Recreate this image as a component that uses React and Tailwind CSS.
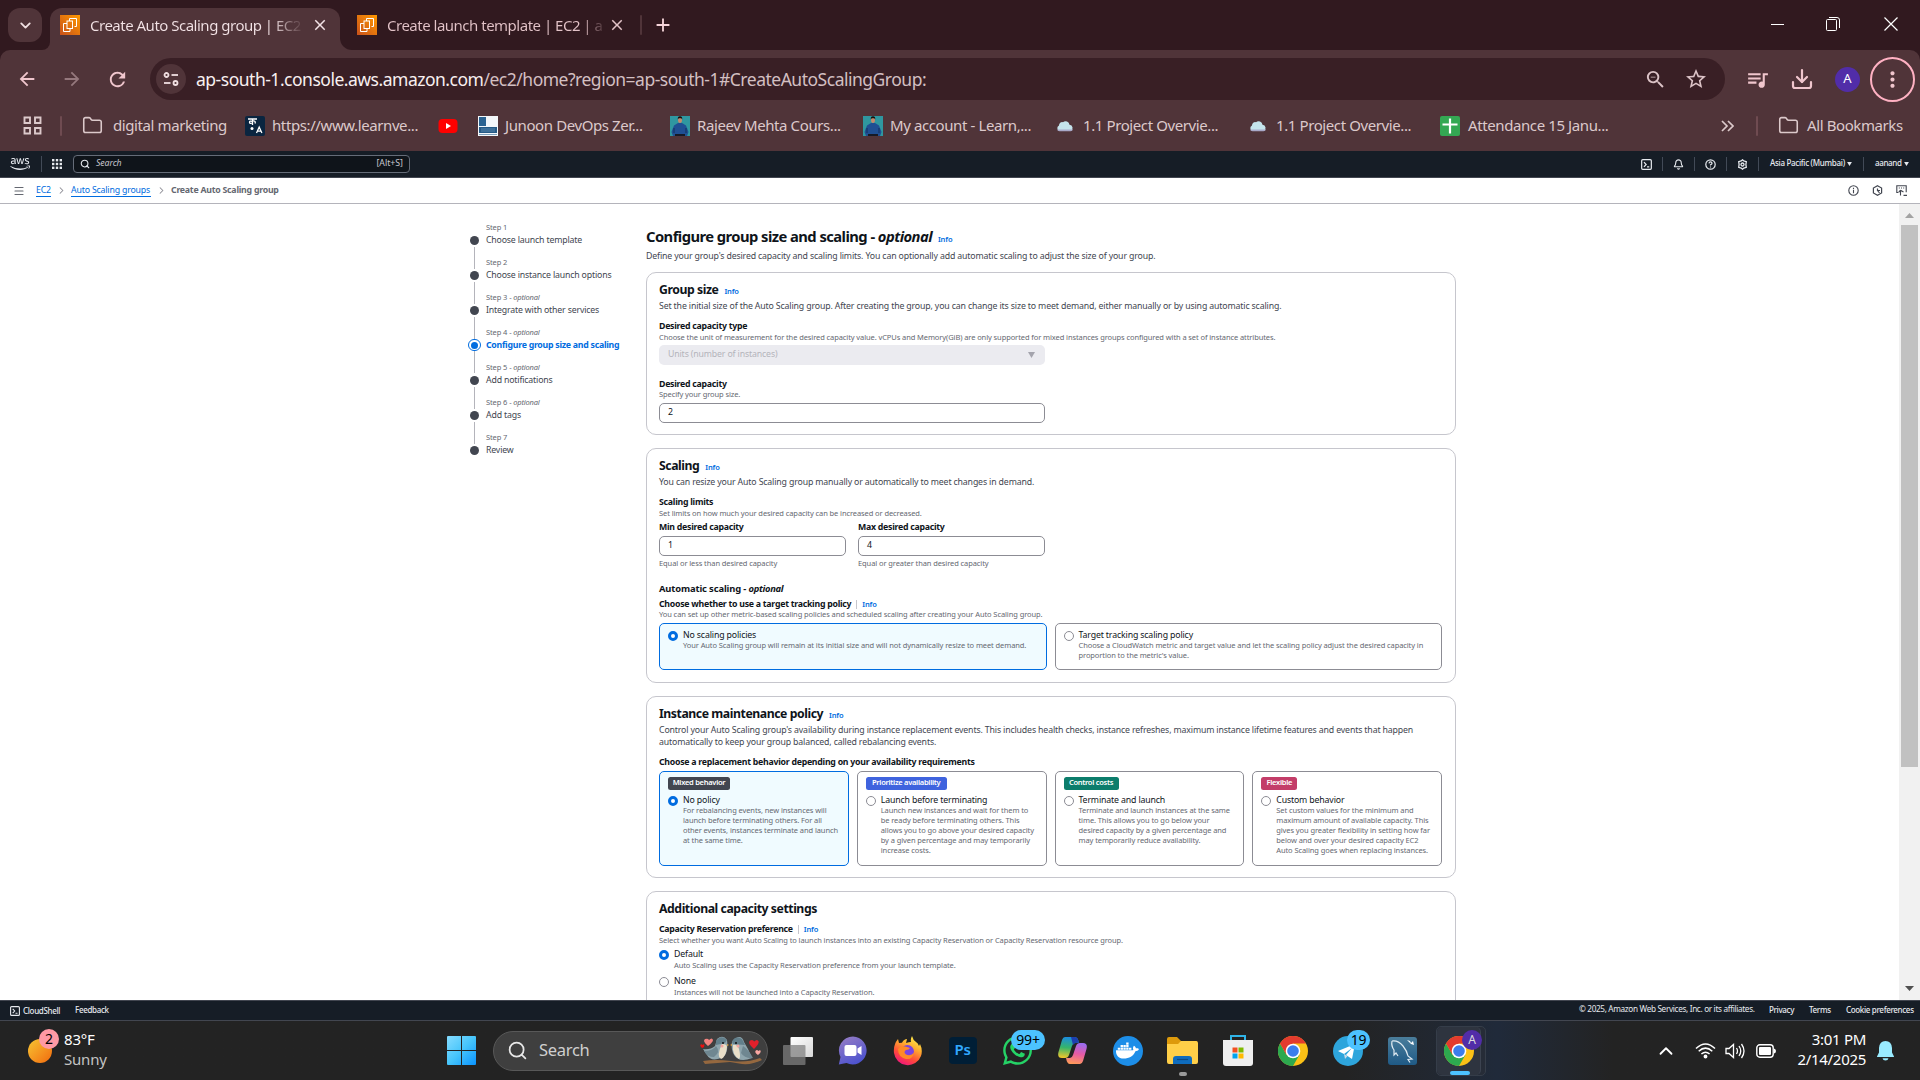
import React from 'react'
import { ChevronDown, ChevronUp, Folder, Download, Search, Bell, Menu, ChevronRight } from 'lucide-react'
import { FaAws, FaWhatsapp, FaDocker } from 'react-icons/fa6'
import { MdArrowBack, MdArrowForward, MdRefresh, MdOutlineZoomOut, MdStarBorder, MdQueueMusic, MdMoreVert, MdAdd, MdClose } from 'react-icons/md'

/* ---------- browser chrome ---------- */

function Ec2Icon() {
  return (
    <svg width="20" height="20" viewBox="0 0 20 20" className="shrink-0">
      <defs>
        <linearGradient id="ec2" x1="0" y1="1" x2="1" y2="0">
          <stop offset="0" stopColor="#c8511b" />
          <stop offset="1" stopColor="#ff9900" />
        </linearGradient>
      </defs>
      <rect width="20" height="20" fill="url(#ec2)" />
      <g fill="none" stroke="#fff" strokeWidth="1">
        <path d="M9.500 6V3.500h7v8h-2" />
        <rect x="7" y="6" width="5.500" height="7.500" />
        <path d="M7 8.500H3.500v8h6.500v-3" />
      </g>
    </svg>
  )
}

function TabStrip() {
  return (
    <div className="flex h-[50px] bg-[#31191f] text-[15px] tracking-[-0.500px]">
      <div className="ml-2 mt-2 flex h-[34px] w-[34px] items-center justify-center rounded-[12px] bg-[#503439] text-[#f0dfe1]">
        <ChevronDown size={17} strokeWidth={2.6} />
      </div>
      <div className="flex w-[8px] items-end bg-[#503439]">
        <div className="h-full w-full rounded-br-[12px] bg-[#31191f]" />
      </div>
      <div className="mt-2 flex h-[42px] w-[290px] items-center rounded-t-[12px] bg-[#503439] pb-2 pl-[10px] text-[#f3e3e6]">
        <Ec2Icon />
        <div className="ml-[10px] w-[221px] whitespace-nowrap bg-linear-to-r from-[#f3e3e6] from-82% to-[#503439] to-97% bg-clip-text text-transparent">
          Create Auto Scaling group | EC2
        </div>
        <MdClose size={18} />
      </div>
      <div className="w-[12px] bg-[#503439]">
        <div className="h-full w-full rounded-bl-[12px] bg-[#31191f]" />
      </div>
      <div className="ml-[5px] mt-2 flex h-[34px] items-center text-[#e3c3c8]">
        <Ec2Icon />
        <div className="ml-[10px] w-[221px] whitespace-nowrap bg-linear-to-r from-[#e3c3c8] from-88% to-[#31191f] bg-clip-text text-transparent">
          Create launch template | EC2 | a
        </div>
        <MdClose size={18} />
        <div className="ml-[14px] h-[20px] w-[2px] rounded bg-[#503439]" />
        <MdAdd size={22} className="ml-[10px] text-[#f6d5da]" />
      </div>
      <div className="ml-auto flex h-[48px] items-center text-white">
        <svg width="13" height="13" viewBox="0 0 13 13" className="mr-[42px]"><path d="M0 6.500h13" stroke="currentColor" /></svg>
        <svg width="14" height="14" viewBox="0 0 14 14" className="mr-[44px]" fill="none" stroke="currentColor">
          <rect x="0.500" y="2.500" width="10" height="11" rx="1" />
          <path d="M3 .5h8q2.500 0 2.500 2.500v8" />
        </svg>
        <svg width="14" height="14" viewBox="0 0 14 14" className="mr-[22px]"><path d="M.5.5l13 13M13.500.5l-13 13" stroke="currentColor" strokeWidth="1.200" /></svg>
      </div>
    </div>
  )
}

function Toolbar() {
  return (
    <div className="flex h-[58px] items-center rounded-t-[10px] bg-[#503439] text-[#f0c6cd]">
      <MdArrowBack size={22} className="ml-[16px]" />
      <MdArrowForward size={22} className="ml-[23px] text-[#95787d]" />
      <MdRefresh size={23} className="ml-[23px]" />
      <div className="ml-[21px] flex h-[42px] w-[1575px] items-center rounded-full bg-[#391f25]">
        <div className="ml-[6px] flex h-[30px] w-[30px] items-center justify-center rounded-full bg-[#503439]">
          <svg width="16" height="16" viewBox="0 0 16 16" fill="none" stroke="#f0dfe1" strokeWidth="1.800">
            <circle cx="3.500" cy="4" r="2" /><path d="M8.500 4H15" />
            <path d="M1 12h6.500" /><circle cx="12.500" cy="12" r="2" />
          </svg>
        </div>
        <div className="ml-[10px] whitespace-nowrap text-[17.500px] tracking-[-0.490px] text-[#d3bfc2]">
          <span className="text-[#f8eff0]">ap-south-1.console.aws.amazon.com</span>/ec2/home?region=ap-south-1#CreateAutoScalingGroup:
        </div>
        <MdOutlineZoomOut size={23} className="ml-auto mr-[17px] text-[#dcc3c7]" />
        <MdStarBorder size={24} className="mr-[17px] text-[#dcc3c7]" />
      </div>
      <MdQueueMusic size={25} className="ml-[20px]" />
      <Download size={24} className="ml-[20px]" strokeWidth={2.200} />
      <div className="ml-[21px] flex h-[25px] w-[25px] items-center justify-center rounded-full bg-[#512da8] text-[13px] text-white">A</div>
      <div className="ml-[10px] flex h-[45px] w-[45px] items-center justify-center rounded-full border-2 border-[#ffb1c3]">
        <MdMoreVert size={25} />
      </div>
    </div>
  )
}

function Instructor() {
  return (
    <svg width="20" height="20" viewBox="0 0 20 20" className="shrink-0">
      <rect width="20" height="20" fill="#2f97a0" />
      <path d="M3 20l-1.500-4L4 9.500 8 7h4l4 2.500 2.500 6.500L17 20z" fill="#1f4f93" />
      <path d="M4 12v5M16 12v5" stroke="#12305f" />
      <path d="M5 18h10v2H5z" fill="#161a26" />
      <ellipse cx="10" cy="4" rx="2" ry="3" fill="#c58a6c" />
      <path d="M7.800 3.500Q7.500.3 10 .3t2.200 3.200l-.9-1.200H8.700z" fill="#15110f" />
    </svg>
  )
}

function Cloud() {
  return (
    <svg width="20" height="20" viewBox="0 0 20 20" className="shrink-0">
      <path d="M4.500 15a3 3 0 0 1-.5-5.600A3.200 3.200 0 0 1 8 6.200a4 4 0 0 1 6.500 2.600A3.200 3.200 0 0 1 15.500 15z" fill="#c5e4ec" />
      <path d="M4.500 15.300q-2-.3-2.500-1.900h16q-.6 1.700-2.500 1.900z" fill="#a9a9c9" />
    </svg>
  )
}

function BookmarksBar() {
  const items = [
    ['w-[163px] gap-[10px]', <Folder size={21} strokeWidth={1.800} className="shrink-0 text-[#dcc9cb]" />, 'digital marketing'],
    ['w-[193px] gap-[7px]', (
      <svg width="20" height="20" viewBox="0 0 20 20" className="shrink-0">
        <rect width="20" height="20" rx="2" fill="#0a2540" />
        <g stroke="#fff" fill="none" strokeWidth="1.300"><path d="M3 3h9M7.500 3v6M7.500 5.500q-3-1-3 .8t3 .7M7.500 5q3.500-.5 2.500 2.500M11.500 17l2.700-6 2.700 6M12.500 15.200h3.500" /></g>
        <circle cx="7" cy="12.500" r="1.500" fill="#fff" />
      </svg>), 'https://www.learnve...'],
    ['w-[40px]', (
      <svg width="20" height="20" viewBox="0 0 20 20"><rect x=".5" y="3" width="19" height="14" rx="4" fill="#f00" /><path d="M8 7l5 3-5 3z" fill="#fff" /></svg>), ''],
    ['w-[192px] gap-[7px]', (
      <svg width="20" height="20" viewBox="0 0 20 20" className="shrink-0">
        <rect width="20" height="20" fill="#f3f7fa" /><path d="M1 1h7v9H1z" fill="#2b6391" /><path d="M1 11h18v6H1z" fill="#255a86" /><path d="M1 18h18v1H1z" fill="#7da0bd" /><path d="M3 13h14M3 15h14" stroke="#6b98bb" strokeWidth=".7" />
      </svg>), 'Junoon DevOps Zer...'],
    ['w-[193px] gap-[7px]', <Instructor />, 'Rajeev Mehta Cours...'],
    ['w-[192px] gap-[7px]', <Instructor />, 'My account - Learn,...'],
    ['w-[193px] gap-[8px]', <Cloud />, '1.1 Project Overvie...'],
    ['w-[192px] gap-[8px]', <Cloud />, '1.1 Project Overvie...'],
    ['w-[272px] gap-[8px]', (
      <svg width="20" height="20" viewBox="0 0 20 20" className="shrink-0"><rect width="20" height="20" rx="2" fill="#34a853" /><path d="M10 2.500v15M2.500 8.500h15" stroke="#fff" strokeWidth="2.200" /></svg>), 'Attendance 15 Janu...'],
  ]
  return (
    <div className="flex h-[43px] items-center bg-[#503439] pb-[8px] pl-[23px] text-[15px] tracking-[-0.400px] text-[#dcc9cb]">
      <svg width="19" height="19" viewBox="0 0 19 19" fill="none" stroke="currentColor" strokeWidth="1.900">
        <path d="M1.500 1.500h5.500v5.500H1.500zM12 1.500h5.500v5.500H12zM1.500 12h5.500v5.500H1.500zM12 12h5.500v5.500H12z" />
      </svg>
      <div className="ml-[18px] mr-[20px] h-[20px] w-[2px] rounded bg-[#6f4b51]" />
      {items.map(([cls, icon, label], i) => (
        <div key={i} className={'flex shrink-0 items-center whitespace-nowrap ' + cls}>{icon}<span>{label}</span></div>
      ))}
      <svg width="13" height="12" viewBox="0 0 13 12" className="ml-[9px]" fill="none" stroke="currentColor" strokeWidth="1.700"><path d="M1 1l5 5-5 5M7 1l5 5-5 5" /></svg>
      <div className="ml-[22px] mr-[20px] h-[20px] w-[2px] rounded bg-[#6f4b51]" />
      <Folder size={21} strokeWidth={1.800} />
      <span className="ml-[8px] whitespace-nowrap">All Bookmarks</span>
    </div>
  )
}

/* ---------- AWS console ---------- */

function ShellIcon({ size = 10 }) {
  return (
    <svg width={size} height={size} viewBox="0 0 10 10" fill="none" stroke="currentColor" strokeWidth="1.100">
      <rect x=".6" y=".6" width="8.800" height="8.800" rx="1" /><path d="M2.700 2.800L4.700 5 2.700 7.200M5.500 7.200h2" />
    </svg>
  )
}

function NavSep() {
  return <div className="h-[14px] w-px bg-[#424a57]" />
}

function AwsNav() {
  return (
    <div className="flex h-[27px] items-center border-b border-[#424650] bg-[#161d26] text-[8px] font-medium tracking-[-0.250px] text-[#e6e9ee]">
      <FaAws size={20} className="ml-[10px]" />
      <div className="ml-[11px] h-[16px] w-px bg-[#424a57]" />
      <svg width="10" height="10" viewBox="0 0 10 10" className="ml-[10px]" fill="currentColor">
        {[0, 3.800, 7.600].map((y) => [0, 3.800, 7.600].map((x) => <rect key={x + '-' + y} x={x} y={y} width="2.400" height="2.400" />))}
      </svg>
      <div className="ml-[11px] flex h-[18px] w-[337px] items-center rounded-[4px] border border-[#656c78] bg-[#0f141a] px-[6px]">
        <Search size={10} strokeWidth={2.600} />
        <span className="ml-[6px] text-[8.750px] font-normal italic tracking-[-0.100px] text-[#c6c6cd]">Search</span>
        <span className="ml-auto text-[8.750px] font-normal tracking-[0] text-[#c6c6cd]">[Alt+S]</span>
      </div>
      <div className="ml-auto flex items-center">
        <ShellIcon size={11} />
        <div className="ml-[10px]"><NavSep /></div>
        <Bell size={11} strokeWidth={2.400} className="ml-[10px]" />
        <div className="ml-[10px]"><NavSep /></div>
        <svg width="11" height="11" viewBox="0 0 11 11" className="ml-[10px]" fill="none" stroke="currentColor" strokeWidth="1.200"><circle cx="5.500" cy="5.500" r="4.700" /><path d="M4 4.300q.2-1.500 1.500-1.500T7 4.200q0 .9-1.500 1.600v.7M5.500 7.500v1" /></svg>
        <div className="ml-[10px]"><NavSep /></div>
        <svg width="11" height="11" viewBox="0 0 11 11" className="ml-[10px]" fill="none" stroke="currentColor" strokeWidth="1.300"><path d="M5.500.8l1.300 1.200 2.500.7-.4 2.800.4 2.800-2.500.7-1.300 1.200L4.200 9l-2.500-.7.4-2.800-.4-2.800L4.200 2z" /><circle cx="5.500" cy="5.500" r="1.500" /></svg>
        <div className="ml-[10px]"><NavSep /></div>
        <span className="ml-[11px] w-[74px] whitespace-nowrap pb-[2px] tracking-[-0.300px]">Asia Pacific (Mumbai)</span>
        <svg width="5" height="4" viewBox="0 0 6 5" className="ml-[3px]" fill="currentColor"><path d="M0 0h6L3 5z" /></svg>
        <div className="ml-[11px]"><NavSep /></div>
        <span className="ml-[11px] w-[26px] whitespace-nowrap pb-[2px] tracking-[-0.350px]">aanand</span>
        <svg width="5" height="4" viewBox="0 0 6 5" className="ml-[3px] mr-[11px]" fill="currentColor"><path d="M0 0h6L3 5z" /></svg>
      </div>
    </div>
  )
}

function Breadcrumbs() {
  return (
    <div className="flex h-[26px] items-center border-b border-[#b4b4bb] bg-white text-[8.750px] leading-[11px] tracking-[-0.170px]">
      <Menu size={12} strokeWidth={2.200} className="ml-[13px] text-[#656871]" />
      <span className="ml-[11px] w-[15px] whitespace-nowrap border-b border-[#006ce0] text-[#006ce0]">EC2</span>
      <ChevronRight size={11} strokeWidth={2.200} className="ml-[5px] text-[#8c8c94]" />
      <span className="ml-[4px] w-[80px] whitespace-nowrap border-b border-[#006ce0] text-[#006ce0]">Auto Scaling groups</span>
      <ChevronRight size={11} strokeWidth={2.200} className="ml-[5px] text-[#8c8c94]" />
      <span className="ml-[4px] whitespace-nowrap font-bold tracking-[-0.240px] text-[#656871]">Create Auto Scaling group</span>
      <div className="ml-auto mr-[13px] flex items-center gap-[13px] text-[#424650]">
        <svg width="11" height="11" viewBox="0 0 11 11" fill="none" stroke="currentColor" strokeWidth="1.100"><circle cx="5.500" cy="5.500" r="4.700" /><path d="M5.500 2.700v1.200M5.500 4.800v3.500" /></svg>
        <svg width="11" height="11" viewBox="0 0 11 11" fill="none" stroke="currentColor" strokeWidth="1.200"><path d="M5.500.7L9.600 3v5L5.500 10.300 1.400 8V3z" /><path d="M5.500 3.500v2h2.500M5.500 5.500L7.500 8" /></svg>
        <svg width="11" height="11" viewBox="0 0 11 11" fill="none" stroke="currentColor" strokeWidth="1.100"><path d="M2.500 7.500H.8V.8h9.400v6.400M2.800 3h1M5 3h1M7.200 3h1" /><path d="M4.500 10.500V5.200M4.500 5.200l-1.700 2M4.500 5.200l3 1.800M7.500 10.400h3.500" /></svg>
      </div>
    </div>
  )
}

const steps = [
  ['Step 1', false, 'Choose launch template'],
  ['Step 2', false, 'Choose instance launch options'],
  ['Step 3', true, 'Integrate with other services'],
  ['Step 4', true, 'Configure group size and scaling'],
  ['Step 5', true, 'Add notifications'],
  ['Step 6', true, 'Add tags'],
  ['Step 7', false, 'Review'],
]

function Steps() {
  return (
    <div className="ml-[468px] w-[178px] shrink-0 pt-[17px]">
      {steps.map(([step, optional, label], i) => (
        <div key={i} className="flex h-[35px]">
          <div className="flex w-[13px] flex-col items-center pt-[13px]">
            {i === 3 ? (
              <div className="flex h-[13px] w-[13px] items-center justify-center rounded-full border-[1.500px] border-[#006ce0]">
                <div className="h-[7px] w-[7px] rounded-full bg-[#006ce0]" />
              </div>
            ) : (
              <div className="my-[2px] h-[9px] w-[9px] shrink-0 rounded-full bg-[#424650]" />
            )}
            {i < 6 && <div className="-mb-[12px] h-[22px] w-px shrink-0 bg-[#b4b4bb]" />}
          </div>
          <div className="ml-[5px] whitespace-nowrap">
            <div className="text-[7.500px] leading-[12px] tracking-[-0.100px] text-[#656871]">
              {step}{optional && <> - <i className="tracking-[-0.200px]">optional</i></>}
            </div>
            <div className={i === 3 ? 'mt-px text-[8.750px] font-bold leading-[13px] tracking-[-0.260px] text-[#006ce0]' : 'mt-px text-[8.750px] leading-[13px] tracking-[-0.170px] text-[#424650]'}>{label}</div>
          </div>
        </div>
      ))}
    </div>
  )
}

function Card({ className = '', children }) {
  return <section className={'rounded-[10px] border border-[#c6c6cd] bg-white pl-[12px] pr-[13px] pt-[9px] ' + className}>{children}</section>
}
function Info({ className = '' }) {
  return <span className={'text-[7.500px] font-semibold not-italic tracking-[-0.150px] text-[#006ce0] ' + className}>Info</span>
}
function Heading({ info, children }) {
  return (
    <h2 className="mb-px whitespace-nowrap text-[12.250px] font-bold leading-[15px] tracking-[-0.440px] text-[#0f141a]">
      {children}{info && <Info className="ml-[6px]" />}
    </h2>
  )
}
function Desc({ children }) {
  return <p className="whitespace-nowrap text-[8.750px] leading-[12px] tracking-[-0.143px] text-[#424650]">{children}</p>
}
function Label({ className = '', children }) {
  return <div className={'whitespace-nowrap text-[8.750px] font-bold leading-[12px] tracking-[-0.260px] text-[#0f141a] ' + className}>{children}</div>
}
function Small({ className = '', children }) {
  return <p className={'whitespace-nowrap text-[7.500px] leading-[10px] tracking-[-0.092px] text-[#656871] ' + className}>{children}</p>
}
function Field({ className = '', children }) {
  return <div className={'flex h-[20px] items-center rounded-[5px] border border-[#8c8c94] px-[8px] text-[8.750px] text-[#0f141a] ' + className}>{children}</div>
}
function Radio({ on }) {
  return on
    ? <div className="h-[10px] w-[10px] shrink-0 rounded-full border-[3px] border-[#006ce0] bg-white" />
    : <div className="h-[10px] w-[10px] shrink-0 rounded-full border border-[#8c8c94] bg-white" />
}
function Tile({ on, badge, badgeClass, title, lines, className = '' }) {
  return (
    <div className={'flex-1 rounded-[5px] border pl-[8px] pt-[5px] ' + (on ? 'border-[#006ce0] bg-[#f0fbff] ' : 'border-[#8c8c94] bg-white ') + className}>
      {badge && <div className={'mb-[4px] flex h-[13px] items-center justify-center whitespace-nowrap rounded-[2.500px] pb-px text-[7.500px] font-semibold tracking-[-0.280px] text-white ' + badgeClass}>{badge}</div>}
      <div className="flex">
        <div className="pt-[2px]"><Radio on={on} /></div>
        <div className="ml-[5px]">
          <div className="whitespace-nowrap text-[8.750px] leading-[12px] tracking-[-0.143px] text-[#0f141a]">{title}</div>
          <div className="-mt-px">{lines.map((l) => <Small key={l}>{l}</Small>)}</div>
        </div>
      </div>
    </div>
  )
}
function LabelSep() {
  return <span className="ml-[5px] mr-[5px] inline-block h-[9px] w-px bg-[#c6c6cd] align-middle" />
}

function Main() {
  return (
    <div className="w-[810px] shrink-0">
      <h1 className="mt-[22px] whitespace-nowrap text-[14.750px] font-bold leading-[20px] tracking-[-0.550px] text-[#0f141a]">
        Configure group size and scaling - <i>optional</i><Info className="ml-[6px]" />
      </h1>
      <div className="mt-px"><Desc>Define your group's desired capacity and scaling limits. You can optionally add automatic scaling to adjust the size of your group.</Desc></div>

      <Card className="mt-[10px] h-[163px]">
        <Heading info>Group size</Heading>
        <Desc>Set the initial size of the Auto Scaling group. After creating the group, you can change its size to meet demand, either manually or by using automatic scaling.</Desc>
        <Label className="mt-[8px]">Desired capacity type</Label>
        <Small>Choose the unit of measurement for the desired capacity value. vCPUs and Memory(GiB) are only supported for mixed instances groups configured with a set of instance attributes.</Small>
        <div className="mt-[3px] flex h-[20px] w-[386px] items-center justify-between rounded-[5px] bg-[#ebebf0] pl-[9px] pr-[10px] text-[8.750px] tracking-[-0.147px] text-[#b4b4bb]">
          Units (number of instances)
          <svg width="7" height="6" viewBox="0 0 7 6" fill="#a4a4ad"><path d="M0 0h7L3.500 6z" /></svg>
        </div>
        <Label className="mt-[13px]">Desired capacity</Label>
        <Small className="-mt-px">Specify your group size.</Small>
        <Field className="mt-[4px] w-[386px]">2</Field>
      </Card>

      <Card className="mt-[13px] h-[235px]">
        <Heading info>Scaling</Heading>
        <Desc>You can resize your Auto Scaling group manually or automatically to meet changes in demand.</Desc>
        <Label className="mt-[8px]">Scaling limits</Label>
        <Small>Set limits on how much your desired capacity can be increased or decreased.</Small>
        <div className="mt-[3px] flex w-[386px] gap-[12px]">
          <div className="w-[187px]">
            <Label>Min desired capacity</Label>
            <Field className="mt-[3px]">1</Field>
            <Small className="mt-[2px]">Equal or less than desired capacity</Small>
          </div>
          <div className="w-[187px]">
            <Label>Max desired capacity</Label>
            <Field className="mt-[3px]">4</Field>
            <Small className="mt-[2px]">Equal or greater than desired capacity</Small>
          </div>
        </div>
        <div className="mt-[14px] whitespace-nowrap text-[9.400px] font-bold leading-[13px] tracking-[-0.130px] text-[#0f141a]">Automatic scaling - <i className="tracking-[-0.300px]">optional</i></div>
        <Label className="mt-[3px]">Choose whether to use a target tracking policy<LabelSep /><Info /></Label>
        <Small className="-mt-px">You can set up other metric-based scaling policies and scheduled scaling after creating your Auto Scaling group.</Small>
        <div className="mt-[4px] flex gap-[8px]">
          <Tile on className="h-[47px]" title="No scaling policies" lines={['Your Auto Scaling group will remain at its initial size and will not dynamically resize to meet demand.']} />
          <Tile className="h-[47px]" title="Target tracking scaling policy" lines={['Choose a CloudWatch metric and target value and let the scaling policy adjust the desired capacity in', "proportion to the metric's value."]} />
        </div>
      </Card>

      <Card className="mt-[13px] h-[182px]">
        <Heading info>Instance maintenance policy</Heading>
        <Desc>Control your Auto Scaling group's availability during instance replacement events. This includes health checks, instance refreshes, maximum instance lifetime features and events that happen<br />automatically to keep your group balanced, called rebalancing events.</Desc>
        <Label className="mt-[8px]">Choose a replacement behavior depending on your availability requirements</Label>
        <div className="mt-[3px] flex gap-[8px]">
          <Tile on className="h-[95px] w-0" badge="Mixed behavior" badgeClass="w-[62px] bg-[#424650]" title="No policy" lines={['For rebalancing events, new instances will', 'launch before terminating others. For all', 'other events, instances terminate and launch', 'at the same time.']} />
          <Tile className="h-[95px] w-0" badge="Prioritize availability" badgeClass="w-[81px] bg-[#3f63de]" title="Launch before terminating" lines={['Launch new instances and wait for them to', 'be ready before terminating others. This', 'allows you to go above your desired capacity', 'by a given percentage and may temporarily', 'increase costs.']} />
          <Tile className="h-[95px] w-0" badge="Control costs" badgeClass="w-[55px] bg-[#0c7d6c]" title="Terminate and launch" lines={['Terminate and launch instances at the same', 'time. This allows you to go below your', 'desired capacity by a given percentage and', 'may temporarily reduce availability.']} />
          <Tile className="h-[95px] w-0" badge="Flexible" badgeClass="w-[36px] bg-[#c33d69]" title="Custom behavior" lines={['Set custom values for the minimum and', 'maximum amount of available capacity. This', 'gives you greater flexibility in setting how far', 'below and over your desired capacity EC2', 'Auto Scaling goes when replacing instances.']} />
        </div>
      </Card>

      <Card className="mt-[13px] h-[160px]">
        <Heading>Additional capacity settings</Heading>
        <Label className="mt-[7px]">Capacity Reservation preference<LabelSep /><Info /></Label>
        <Small>Select whether you want Auto Scaling to launch instances into an existing Capacity Reservation or Capacity Reservation resource group.</Small>
        {[['Default', 'Auto Scaling uses the Capacity Reservation preference from your launch template.', true], ['None', 'Instances will not be launched into a Capacity Reservation.', false]].map(([t, d, on]) => (
          <div key={t} className="mb-[5px] mt-[3px] flex">
            <div className="pt-[2px]"><Radio on={on} /></div>
            <div className="ml-[5px]">
              <div className="text-[8.750px] leading-[12px] tracking-[-0.147px] text-[#0f141a]">{t}</div>
              <Small>{d}</Small>
            </div>
          </div>
        ))}
      </Card>
    </div>
  )
}

function Scrollbar() {
  return (
    <div className="ml-auto flex h-full w-[21px] flex-col items-center bg-[#f1f1f1]">
      <svg width="9" height="5" viewBox="0 0 9 5" className="mt-[9px]" fill="#a3a3a3"><path d="M4.500 0L9 5H0z" /></svg>
      <div className="mt-[7px] h-[542px] w-[17px] bg-[#c1c1c1]" />
      <svg width="9" height="5" viewBox="0 0 9 5" className="mb-[9px] mt-auto" fill="#505050"><path d="M0 0h9L4.500 5z" /></svg>
    </div>
  )
}

function Footer() {
  return (
    <div className="flex h-[21px] items-center whitespace-nowrap border-y border-[#424650] bg-[#161d26] text-[8px] font-medium tracking-[-0.330px] text-[#e6e9ee]">
      <span className="ml-[10px]"><ShellIcon size={10} /></span>
      <span className="ml-[3px] w-[52px]">CloudShell</span>
      <span className="pb-[2px]">Feedback</span>
      <span className="ml-auto w-[190px] pb-[2px] font-normal tracking-[-0.330px] text-[8.200px]">© 2025, Amazon Web Services, Inc. or its affiliates.</span>
      <span className="w-[40px] pb-[2px]">Privacy</span>
      <span className="w-[37px] pb-[2px]">Terms</span>
      <span className="w-[74px] pb-[2px]">Cookie preferences</span>
    </div>
  )
}

/* ---------- taskbar ---------- */

function Chrome() {
  return (
    <svg width="30" height="30" viewBox="0 0 30 30">
      <circle cx="15" cy="15" r="15" fill="#fbc116" />
      <path d="M2 7.500A15 15 0 0 0 15 30l6.500-11.300L15 15 8.500 18.700z" fill="#2da94f" />
      <path d="M2 7.500A15 15 0 0 1 28 7.500H15L8.500 18.700z" fill="#e33b2e" />
      <circle cx="15" cy="15" r="7.300" fill="#fff" />
      <circle cx="15" cy="15" r="5.800" fill="#3b7ded" />
    </svg>
  )
}

function Birds() {
  return (
    <svg width="62" height="30" viewBox="0 0 62 30">
      <path d="M3 25q12-2 28 0t29-3l2 2q-10 5-20 4L30 26 5 28z" fill="#95683f" />
      <path d="M3 13q7 1 12-3l2-7q6-5 10 1 2 15-6 18-10 4-14-3z" fill="#8fa6ae" />
      <path d="M22 8q5 0 5 3-1 10-6 12-5-3 1-15z" fill="#eadfc8" />
      <path d="M16 5q5-7 11-1l-2 3-9 2z" fill="#627f8b" />
      <path d="M4 15q9 0 12-5 5 6-2 11-7 0-10-6z" fill="#6f8791" />
      <path d="M52 22q-14 6-19-5-4-12 3-15 6-3 8 4l4 7z" fill="#8fa6ae" />
      <path d="M33 9q4-1 6 4 2 8 0 10-7-4-6-14z" fill="#eadfc8" />
      <path d="M32 6q3-7 10-3l3 6-12-1z" fill="#627f8b" />
      <path d="M43 10q6 4 10 12-8 1-12-5z" fill="#6f8791" />
      <circle cx="23" cy="7" r="1" fill="#111" /><circle cx="36" cy="7" r="1" fill="#111" />
      <circle cx="22" cy="10" r="1.500" fill="#f2a5a0" /><circle cx="38" cy="10" r="1.500" fill="#f2a5a0" />
      <path d="M27 8l2 1-2 1zM32 8l-2 1 2 1z" fill="#e0a23c" />
      <path d="M8 10Q2 5 5 3q3-1 4 1 3-3 4 0 0 2-5 6z" fill="#f3837f" />
      <path d="M2 12q-3-3-1-3.600Q2 8 2.400 9q2-1.500 2 .5T2 12z" fill="#e11" />
      <path d="M54 13q-7-6-4-8.500 3-1.500 4.200 1 3-3 4.500 0Q59 8 54 13z" fill="#e3202b" />
      <path d="M58 19q-4-3-2.200-4.600 1.700-.8 2.400.6 2-1.600 2.600 0Q61 17 58 19z" fill="#f9a7a2" />
    </svg>
  )
}

function AppIcon({ children, className = '' }) {
  return <div className={'relative flex h-[50px] w-[55px] shrink-0 items-center justify-center ' + className}>{children}</div>
}

function Taskbar() {
  return (
    <div className="flex h-[59px] items-center bg-linear-to-r from-[#232323] from-70% via-[#202a3a] via-78% to-[#232323] to-84% text-[15px] tracking-[-0.200px] text-white">
      <div className="relative ml-[28px] h-[24px] w-[24px] rounded-full bg-linear-to-br from-[#f5c432] to-[#f0680c]">
        <div className="absolute -top-[10px] left-[11px] flex h-[20px] w-[20px] items-center justify-center rounded-full bg-[#ff99a4] text-[14px] text-black">2</div>
      </div>
      <div className="ml-[12px] w-[383px] pb-[4px] leading-[20px]">
        <div>83°F</div>
        <div className="text-[#c4c4c4]">Sunny</div>
      </div>
      <svg width="29" height="29" viewBox="0 0 29 29">
        <defs><linearGradient id="win" x1="0" y1="0" x2="1" y2="1"><stop offset="0" stopColor="#86dcff" /><stop offset=".5" stopColor="#46c5fb" /><stop offset="1" stopColor="#0a93ff" /></linearGradient></defs>
        <path d="M0 1q0-1 1-1h13v14H0zM15 0h13q1 0 1 1v13H15zM0 15h14v14H1q-1 0-1-1zM15 15h14v13q0 1-1 1H15z" fill="url(#win)" />
      </svg>
      <div className="ml-[17px] flex h-[40px] w-[275px] shrink-0 items-center rounded-full border border-[#585858] bg-[#3f3f3f] pl-[13px] text-[16.500px] tracking-[-0.300px] text-[#cfcfcf]">
        <Search size={21} strokeWidth={2} className="text-[#e8e8e8]" />
        <span className="ml-[11px] w-[161px]">Search</span>
        <Birds />
      </div>

      <div className="ml-[2px] flex">
        <AppIcon>
          <svg width="30" height="28" viewBox="0 0 30 28">
            <defs><linearGradient id="tv" x1="0" y1="0" x2="1" y2="1"><stop stopColor="#fff" /><stop offset="1" stopColor="#d8d8d8" /></linearGradient></defs>
            <rect x="7.500" width="22.500" height="20" rx="1" fill="url(#tv)" /><rect y="8" width="22.500" height="20" rx="1" fill="#808080" opacity=".75" />
          </svg>
        </AppIcon>
        <AppIcon>
          <svg width="29" height="29" viewBox="0 0 29 29">
            <defs><linearGradient id="tm" x1="0" y1="0" x2=".5" y2="1"><stop stopColor="#9a7fc4" /><stop offset="1" stopColor="#4f54cf" /></linearGradient></defs>
            <path d="M15 .5a14 14 0 1 1-6.500 26.600L.8 28.500 2.500 21A14 14 0 0 1 15 .5z" fill="url(#tm)" />
            <rect x="6.500" y="9" width="12" height="11" rx="2" fill="#fff" /><path d="M19.500 12.500l4-2.500v9l-4-2.500z" fill="#fff" />
          </svg>
        </AppIcon>
        <AppIcon>
          <svg width="30" height="30" viewBox="0 0 30 30">
            <defs><linearGradient id="ff" x1=".8" y1="0" x2=".3" y2="1"><stop stopColor="#fff44f" /><stop offset=".35" stopColor="#ffb02e" /><stop offset=".7" stopColor="#ff4a3a" /><stop offset="1" stopColor="#f0157f" /></linearGradient></defs>
            <path d="M19 0q1 4 4 6 2 1 3 4l1-2q3 6 1 12A14 14 0 0 1 1 17Q0 9 5 3l1 4 3-.3Q11 3 14 3l-1 4q3-1 5-1-.7-3 1-6z" fill="url(#ff)" />
            <circle cx="14.500" cy="15.500" r="6.500" fill="#7a45e0" /><path d="M5 13q3-4 9-2l3 1q-1 2-4 2-3 2 0 4.500 5 2 8-2Q20 24 13 23q-8-2-8-10z" fill="#ff8a26" />
          </svg>
        </AppIcon>
        <AppIcon>
          <div className="flex h-[27px] w-[28px] items-center justify-center rounded-[4px] bg-[#001e36] pb-[3px] text-[15px] font-semibold text-[#31a8ff]">Ps</div>
        </AppIcon>
        <AppIcon>
          <FaWhatsapp size={33} color="#25d366" />
          <div className="absolute left-[21px] top-[4px] flex h-[20px] w-[34px] items-center justify-center rounded-full bg-[#4cc2ff] text-[14px] text-black">99+</div>
        </AppIcon>
        <AppIcon>
          <svg width="29" height="27" viewBox="0 0 29 27">
            <defs>
              <linearGradient id="c1" x1=".4" y1="0" x2=".3" y2="1"><stop stopColor="#1b8ce0" /><stop offset=".5" stopColor="#35b56a" /><stop offset="1" stopColor="#f3c62a" /></linearGradient>
              <linearGradient id="c2" x1=".6" y1="0" x2=".4" y2="1"><stop stopColor="#9b6cf0" /><stop offset=".5" stopColor="#e65aa5" /><stop offset="1" stopColor="#ff9a5a" /></linearGradient>
            </defs>
            <path d="M7 0h10q3 0 4 6h-4q-2 0-3 3l-3 9q-1 3-4 3H4q-5 0-3.500-6L4 3q1-3 3-3z" fill="url(#c1)" />
            <path d="M22 27H12q-3 0-4-6h4q2 0 3-3l3-9q1-3 4-3h3q5 0 3.500 6L25 24q-1 3-3 3z" fill="url(#c2)" />
            <path d="M13 0h4q3 0 4 6-4-1-6 2z" fill="#1d3fae" />
          </svg>
        </AppIcon>
        <AppIcon>
          <div className="flex h-[30px] w-[30px] items-center justify-center rounded-full bg-[#1d8ee8] text-white"><FaDocker size={23} /></div>
        </AppIcon>
        <AppIcon>
          <svg width="31" height="27" viewBox="0 0 31 27">
            <path d="M0 2q0-2 2-2h8l4 4h15q1 0 1 1v8H0z" fill="#dd9a0c" />
            <path d="M0 7h11l3-3h15q2 0 2 2v19q0 2-2 2H2q-2 0-2-2z" fill="#ffcf48" />
            <path d="M6 27v-5q0-3 3-3h13q3 0 3 3v5z" fill="#0f6cbd" /><path d="M10 22.500h11" stroke="#0a4a86" strokeWidth="1.200" />
          </svg>
          <div className="absolute bottom-0 h-[4px] w-[8px] rounded-full bg-[#9a9a9a]" />
        </AppIcon>
        <AppIcon>
          <svg width="30" height="32" viewBox="0 0 30 32">
            <path d="M8 6V1h14v5" fill="none" stroke="#2fb4e8" strokeWidth="2" />
            <path d="M0 5h30v23q0 3-3 3H3q-3 0-3-3z" fill="#efefef" />
            <path d="M9.500 12.500h5v5h-5z" fill="#f25022" /><path d="M15.500 12.500h5v5h-5z" fill="#7fba00" /><path d="M9.500 18.500h5v5h-5z" fill="#00a4ef" /><path d="M15.500 18.500h5v5h-5z" fill="#ffb900" />
          </svg>
        </AppIcon>
        <AppIcon><Chrome /></AppIcon>
        <AppIcon>
          <svg width="30" height="30" viewBox="0 0 30 30"><circle cx="15" cy="15" r="15" fill="#2ea5dc" /><path d="M5 15l17-7-3 15-6-4 6-7-8 6z" fill="#fff" /><path d="M11 18l1 5 2.500-3z" fill="#c8dcea" /></svg>
          <div className="absolute left-[27px] top-[4px] flex h-[20px] w-[23px] items-center justify-center rounded-full bg-[#4cc2ff] text-[14px] text-black">19</div>
        </AppIcon>
        <AppIcon>
          <svg width="29" height="28" viewBox="0 0 29 28">
            <defs><linearGradient id="my" x1="0" y1="0" x2="0" y2="1"><stop stopColor="#4a7d9b" /><stop offset="1" stopColor="#1f5a86" /></linearGradient></defs>
            <rect width="29" height="28" rx="3" fill="url(#my)" />
            <path d="M4 4q6-1 11 5 4 5 5 10l4 3-4 .5 2 3M4 4q-1 5 2 9v5l2-2 2 3" fill="none" stroke="#dfeaf1" strokeWidth="1.200" />
            <path d="M19 3l3 1 1 2 2-2 1 4-3-1z" fill="#fff" />
          </svg>
        </AppIcon>
        <div className="flex w-[56px] justify-end">
          <div className="flex h-[50px] w-[50px] rounded-[5px] border border-[#353d49] bg-[#262c37]">
            <div className="relative flex h-[48px] w-[44px] items-center justify-center rounded-[5px] border-r border-[#3c4350] bg-[#2e343f]">
              <Chrome />
              <div className="absolute left-[25px] top-[3px] flex h-[20px] w-[20px] items-center justify-center rounded-full bg-[#512da8] text-[12px] text-[#ddd]">A</div>
              <div className="absolute bottom-0 left-[13px] h-[4px] w-[20px] rounded-full bg-[#4cc2ff]" />
            </div>
          </div>
        </div>
      </div>

      <div className="ml-auto flex items-center">
        <ChevronUp size={22} strokeWidth={2} />
        <svg width="21" height="16" viewBox="0 0 21 16" className="ml-[18px]" fill="none" stroke="#fff" strokeWidth="1.500">
          <path d="M1 5.500q9.500-9 19 0M3.700 8.300q6.800-6.300 13.600 0M6.400 11q4.100-3.600 8.200 0" /><circle cx="10.500" cy="13.500" r="1.200" fill="#fff" />
        </svg>
        <svg width="21" height="18" viewBox="0 0 21 18" className="ml-[9px]" fill="none" stroke="#fff" strokeWidth="1.300">
          <path d="M1 6.500h3L8.500 2.500v13L4 11.500H1zM11.500 6q2 3 0 6M14 4q3.500 5 0 10M16.500 2q5 7 0 14" />
        </svg>
        <svg width="20" height="14" viewBox="0 0 20 14" className="ml-[10px]">
          <rect x=".8" y=".8" width="16.400" height="12.400" rx="3" fill="none" stroke="#fff" strokeWidth="1.400" /><rect x="3" y="3" width="12" height="8" rx="1" fill="#fff" /><path d="M18 4.500q2 .5 2 2.500t-2 2.500z" fill="#fff" />
        </svg>
        <div className="ml-[16px] w-[74px] pb-[4px] text-right leading-[20px] tracking-[-0.300px]">
          <div>3:01 PM</div>
          <div>2/14/2025</div>
        </div>
        <svg width="17" height="20" viewBox="0 0 17 20" className="ml-[11px] mr-[26px]" fill="#99ebff">
          <path d="M8.500 0q6 0 6.500 7v4.500l2 4q0 .5-.5.500H.5Q0 16 0 15.500l2-4V7q.5-7 6.500-7zM5.500 17.300h6q-.5 2.200-3 2.200t-3-2.200z" />
        </svg>
      </div>
    </div>
  )
}

export default function App() {
  return (
    <div className="flex h-[1080px] w-[1920px] flex-col overflow-hidden bg-white font-['Noto_Sans',sans-serif]">
      <TabStrip />
      <div className="bg-[#31191f]"><Toolbar /></div>
      <BookmarksBar />
      <AwsNav />
      <Breadcrumbs />
      <div className="flex h-[796px] overflow-hidden">
        <Steps />
        <Main />
        <Scrollbar />
      </div>
      <Footer />
      <Taskbar />
    </div>
  )
}
